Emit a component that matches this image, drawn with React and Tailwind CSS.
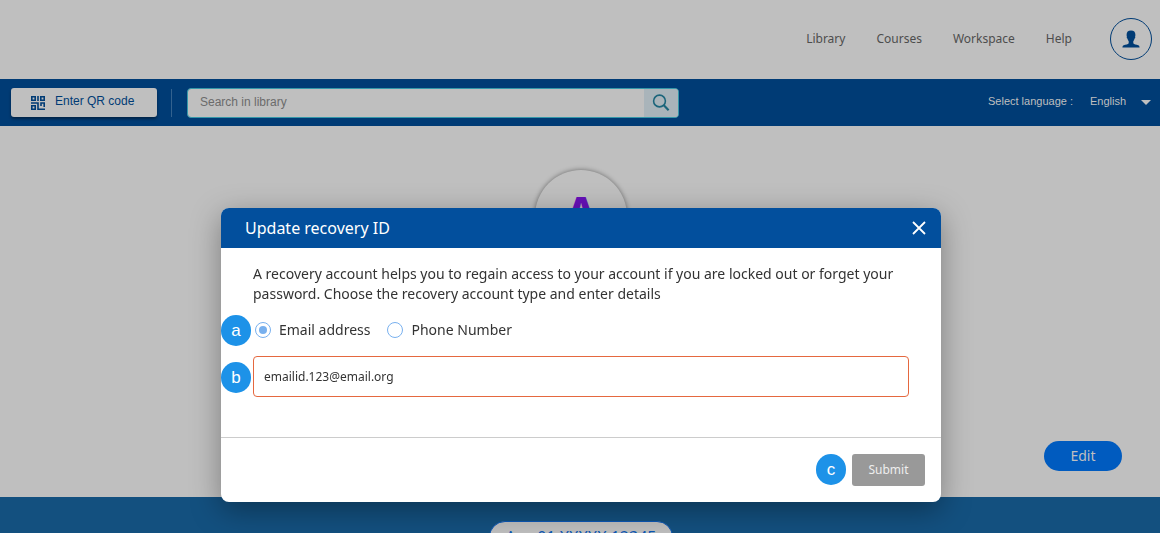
import React, { useState } from "react";

const navItems = ["Library", "Courses", "Workspace", "Help"];

function UserIcon() {
  return (
    <svg viewBox="0 0 18 18" className="h-[18px] w-[18px]" fill="currentColor" aria-hidden="true">
      <path d="M9 0.5c3 0 4.400 1.600 4.400 4.200 0 1.100-.2 1.600-.3 2 .4.5.1 1.600-.5 1.900-.2 1.200-.8 2.100-1.300 2.700v1.900c.5 1 3.200 1.300 4.900 2.100.9.400 1.300 1.100 1.400 2.200H.4c.1-1.100.5-1.800 1.400-2.200 1.700-.8 4.400-1.100 4.900-2.100v-1.900c-.5-.6-1.100-1.500-1.300-2.700-.6-.3-.9-1.400-.5-1.900-.1-.4-.3-.9-.3-2C4.600 2.100 6 .5 9 .5z" />
    </svg>
  );
}

function QrIcon() {
  return (
    <svg viewBox="0 0 14 14" className="h-3.5 w-3.5" fill="none" stroke="currentColor" strokeWidth="1.600" aria-hidden="true">
      <path d="M.8.8h3.400v3.400H.8zM9.800.8h3.400v3.400H9.800zM.8 9.800h3.400v3.400H.8zM7 0v5M0 7h7v6.200h7M10 10V7h3.200v4" />
    </svg>
  );
}

function SearchIcon() {
  return (
    <svg viewBox="0 0 18 18" className="h-[18px] w-[18px]" fill="none" stroke="currentColor" aria-hidden="true">
      <circle cx="7.500" cy="7" r="5.900" strokeWidth="1.600" />
      <path d="M11.800 11.300l4.800 4.900" strokeWidth="2.200" />
    </svg>
  );
}

function StepBadge({ children, className }) {
  return (
    <span
      className={`absolute flex h-[31px] w-[30px] items-center justify-center rounded-full bg-[#1d92e8] font-['Liberation_Sans',sans-serif] text-[17px] text-white ${className}`}
    >
      {children}
    </span>
  );
}

function RadioOption({ value, label, selected, onSelect }) {
  return (
    <label className="flex items-center gap-2 text-sm leading-5">
      <input
        type="radio"
        name="recovery-type"
        value={value}
        checked={selected === value}
        onChange={() => onSelect(value)}
        className="grid h-4 w-4 appearance-none place-items-center rounded-full border border-[#78b0ee] bg-white before:h-2 before:w-2 before:rounded-full before:content-[''] checked:before:bg-[#78b0ee]"
      />
      {label}
    </label>
  );
}

function Header() {
  return (
    <header className="flex h-[79px] items-center justify-end pr-2 pb-0.5">
      <nav className="flex gap-[31px] pr-[38px] text-xs text-[#4d4d4d]">
        {navItems.map((item) => (
          <a key={item} href="#">
            {item}
          </a>
        ))}
      </nav>
      <button
        aria-label="Profile"
        className="flex h-[42px] w-[42px] items-center justify-center rounded-full border border-[#003b75] text-[#003b75]"
      >
        <UserIcon />
      </button>
    </header>
  );
}

function Toolbar() {
  return (
    <div className="flex h-[47px] items-center bg-[#003b75] pr-1 pl-[11px] font-['Liberation_Sans',sans-serif] text-xs">
      <button className="flex h-[29px] w-[146px] items-center gap-2.5 rounded-[3px] bg-[#bfbfbf] pl-5 text-[#003b75] shadow-[0_2px_3px_rgba(0,0,0,0.4)]">
        <QrIcon />
        <span className="pb-1">Enter QR code</span>
      </button>
      <div className="mr-[15px] ml-3.5 h-7 w-px bg-[#33628f]" />
      <form
        className="flex h-[30px] w-[492px] overflow-hidden rounded border border-[#3598a9] bg-[#bfbfbf]"
        onSubmit={(e) => e.preventDefault()}
      >
        <input
          type="search"
          aria-label="Search in library"
          placeholder="Search in library"
          className="min-w-0 flex-1 px-3 pb-0.5 outline-none placeholder:text-[#6b6b6b]"
        />
        <button aria-label="Search" className="flex w-[34px] items-center justify-center bg-[#a9b4ba] text-[#1b657b]">
          <SearchIcon />
        </button>
      </form>
      <div className="ml-auto flex items-center pb-0.5 text-[11px] text-[#bfbfbf]">
        <label htmlFor="language">Select language :</label>
        <div className="relative ml-[17px] flex items-center">
          <select id="language" className="w-[66px] appearance-none bg-transparent outline-none">
            <option>English</option>
          </select>
          <svg viewBox="0 0 10 5" className="pointer-events-none absolute top-1.5 right-[5px] h-[5px] w-2.5" fill="currentColor" aria-hidden="true">
            <path d="M0 0h10L5 5z" />
          </svg>
        </div>
      </div>
    </div>
  );
}

function RecoveryDialog() {
  const [type, setType] = useState("email");
  return (
    <div className="fixed inset-0 flex items-start justify-center overflow-hidden pt-[208px] pl-0.5">
      <section
        role="dialog"
        aria-labelledby="dialog-title"
        className="w-full max-w-[720px] rounded-lg bg-white text-[#333333] shadow-[0_8px_30px_rgba(0,0,0,0.35)]"
      >
        <div className="flex h-10 items-center justify-between rounded-t-lg bg-[#024f9d] pr-[15px] pl-6 text-white">
          <h2 id="dialog-title" className="text-base">
            Update recovery ID
          </h2>
          <button aria-label="Close" className="flex">
            <svg viewBox="0 0 14 14" className="h-3.5 w-3.5" stroke="currentColor" strokeWidth="1.800" aria-hidden="true">
              <path d="M1 1l12 12M13 1L1 13" />
            </svg>
          </button>
        </div>
        <div className="px-8 pt-4 pb-10">
          <p className="text-sm leading-5">
            A recovery account helps you to regain access to your account if you are locked out or forget your password.
            Choose the recovery account type and enter details
          </p>
          <div className="relative mt-4 flex gap-[17px] pl-0.5">
            <StepBadge className="-top-[5px] -left-8">a</StepBadge>
            <RadioOption value="email" label="Email address" selected={type} onSelect={setType} />
            <RadioOption value="phone" label="Phone Number" selected={type} onSelect={setType} />
          </div>
          <div className="relative mt-4">
            <StepBadge className="top-1.5 -left-8">b</StepBadge>
            <input
              type="text"
              aria-label="Recovery ID"
              defaultValue="emailid.123@email.org"
              className="block h-[41px] w-full rounded border border-[#e5683f] px-2.5 text-xs outline-none"
            />
          </div>
        </div>
        <div className="flex justify-end border-t border-[#cccccc] p-4">
          <div className="relative">
            <StepBadge className="top-0 -left-9">c</StepBadge>
            <button className="h-8 w-[73px] rounded-[3px] bg-[#999999] text-xs text-[#eeeeee]">Submit</button>
          </div>
        </div>
      </section>
    </div>
  );
}

export default function App() {
  return (
    <div className="flex h-screen flex-col overflow-hidden bg-[#bfbfbf] font-['Noto_Sans',sans-serif]">
      <Header />
      <Toolbar />
      <main className="flex h-[371px] shrink-0 flex-col items-center justify-between pt-11 pb-[26px]">
        <div className="ml-0.5 flex h-[92px] w-[92px] items-center justify-center rounded-full pb-1 text-5xl font-bold text-[#6610b8] shadow-[0_0_5px_rgba(0,0,0,0.45)]">
          A
        </div>
        <button className="mr-[38px] h-[30px] w-[78px] self-end rounded-full bg-[#005bbf] text-sm text-[#bfbfbf]">
          Edit
        </button>
      </main>
      <footer className="flex min-h-9 flex-1 items-start justify-center bg-[#13507f] pt-6 pl-0.5">
        <span className="flex h-8 w-[184px] shrink-0 items-center justify-center rounded-full border border-[#0b57b5] bg-[#bfbfbf] text-base leading-6 text-[#0b57b5]">
          A.....01 XXXXX 12345
        </span>
      </footer>
      <RecoveryDialog />
    </div>
  );
}
